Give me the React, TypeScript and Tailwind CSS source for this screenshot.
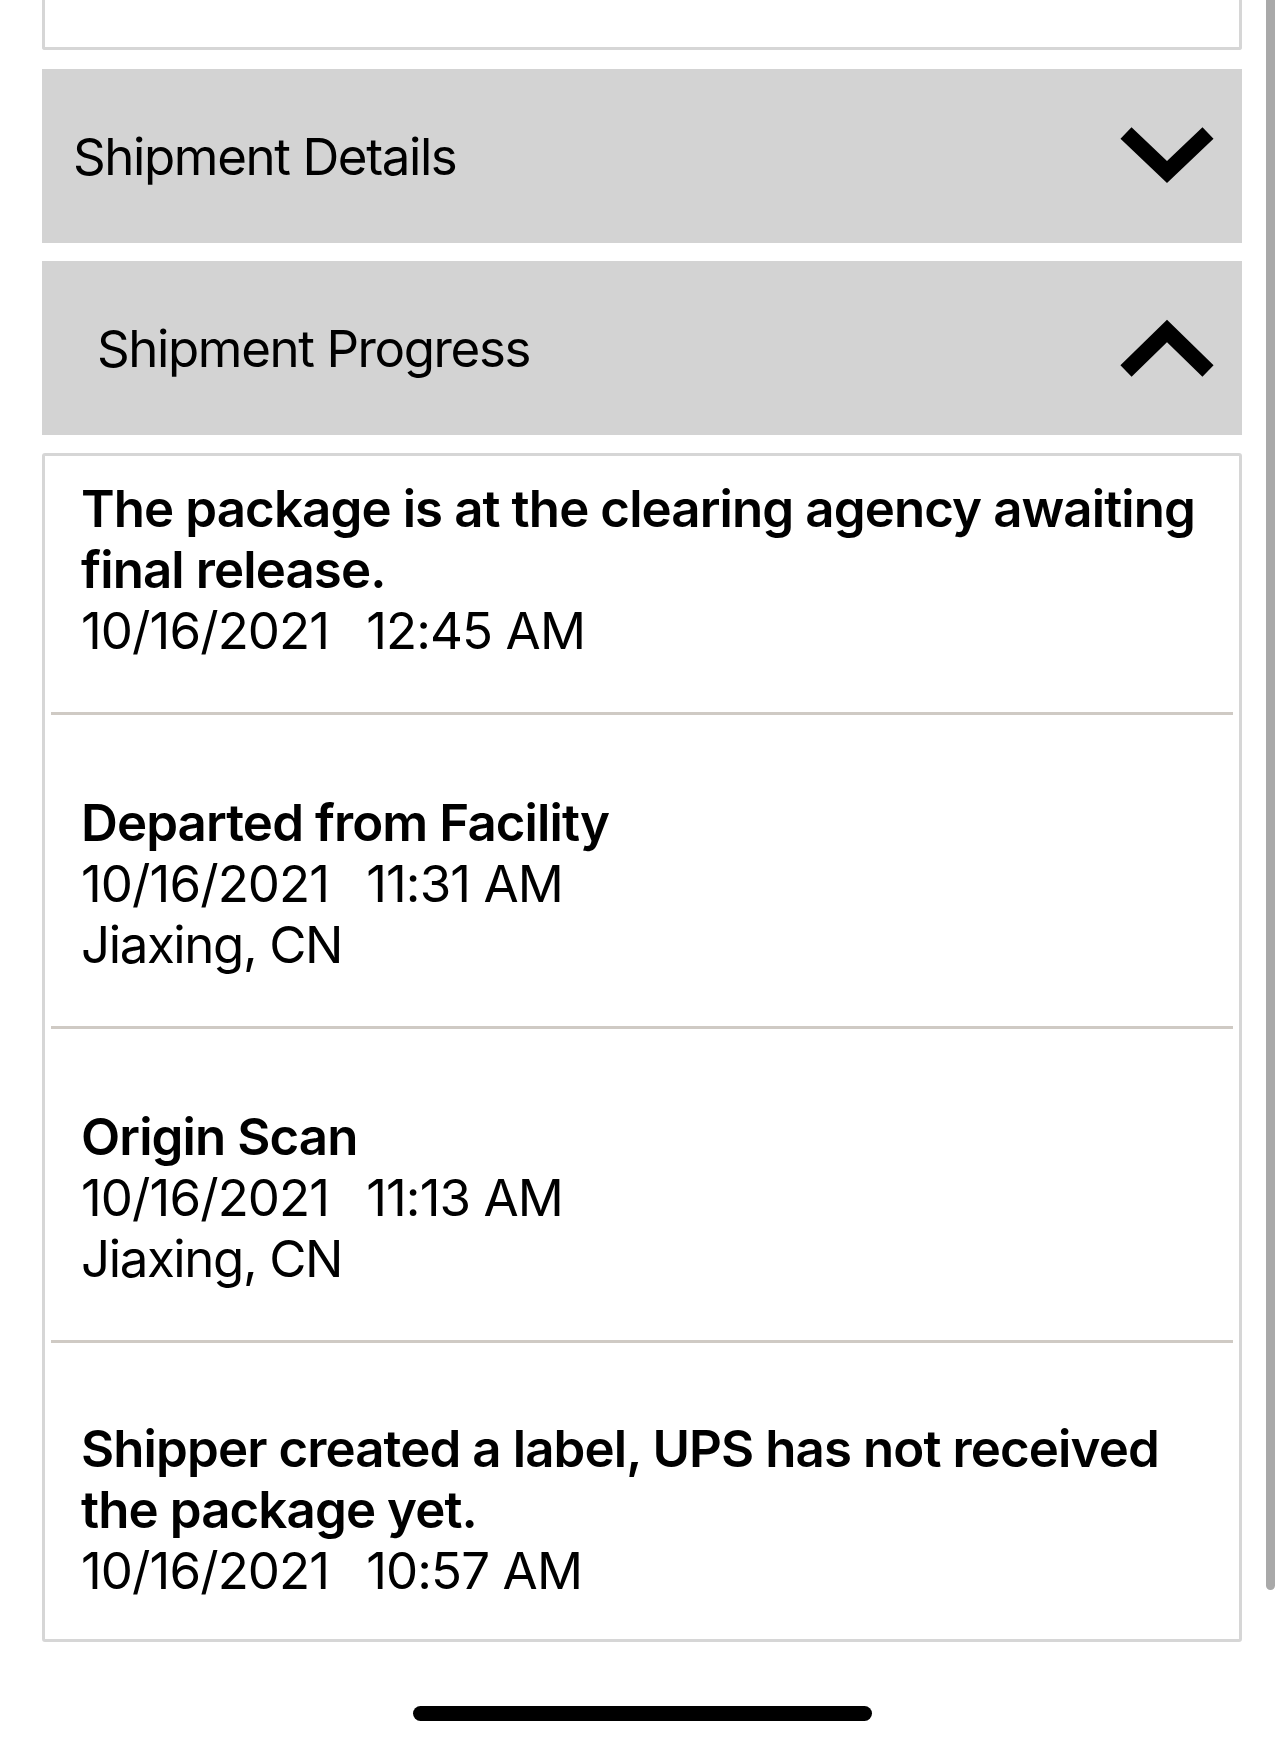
import type { ReactNode } from "react";

type TrackingEvent = {
  id: string;
  title: string;
  date: string;
  time: string;
  location?: string;
};

const events: TrackingEvent[] = [
  {
    id: "clearance",
    title: "The package is at the clearing agency awaiting final release.",
    date: "10/16/2021",
    time: "12:45 AM",
  },
  {
    id: "departed",
    title: "Departed from Facility",
    date: "10/16/2021",
    time: "11:31 AM",
    location: "Jiaxing, CN",
  },
  {
    id: "origin",
    title: "Origin Scan",
    date: "10/16/2021",
    time: "11:13 AM",
    location: "Jiaxing, CN",
  },
  {
    id: "label",
    title: "Shipper created a label, UPS has not received the package yet.",
    date: "10/16/2021",
    time: "10:57 AM",
  },
];

function Chevron({ up }: { up?: boolean }) {
  return (
    <svg width="90" height="58" viewBox="0 0 90 58" fill="none" className="shrink-0 overflow-visible">
      <polyline
        points={up ? "4,52 45,12 86,52" : "4,6 45,45 86,6"}
        stroke="#000"
        strokeWidth="16"
        strokeLinejoin="miter"
        strokeLinecap="butt"
      />
    </svg>
  );
}

function SectionHeader({ children, up, indent }: { children: ReactNode; up?: boolean; indent: string }) {
  return (
    <div className={`flex h-[174px] items-center justify-between bg-[#d3d3d3] pr-[30px] ${indent}`}>
      <span className="text-[51px] leading-[61px] tracking-[-1.4px] text-black">{children}</span>
      <Chevron up={up} />
    </div>
  );
}

export default function App() {
  return (
    <div
      className="relative min-h-[1745px] overflow-hidden bg-white px-[42px] pb-[24px]"
      style={{ fontFamily: "Inter, 'Noto Sans', sans-serif" }}
    >
      {/* scroll indicator */}
      <div className="absolute right-[9px] top-0 h-[1590px] w-[9px] rounded-b-full bg-[#a9a9a9]" />

      <div className="h-[50px] rounded-b-[3px] border-x-[3px] border-b-[3px] border-[#d6d6d6] bg-white" />

      <div className="mt-[19px] flex flex-col gap-[18px]">
        <SectionHeader indent="pl-[31px]">Shipment Details</SectionHeader>
        <SectionHeader indent="pl-[55px]" up>
          Shipment Progress
        </SectionHeader>

        <div className="rounded-[3px] border-[3px] border-[#d6d6d6] bg-white">
          {events.map((ev, i) => {
            const first = i === 0;
            const last = i === events.length - 1;
            return (
              <div key={ev.id}>
                <div
                  className={`pl-[36px] pr-[20px] text-[51px] leading-[61px] tracking-[-1.4px] text-black ${
                    first ? "pt-[22px]" : last ? "pt-[75px]" : "pt-[77px]"
                  } ${last ? "pb-[38px]" : "pb-[51px]"}`}
                >
                  <p className="font-semibold tracking-[-0.9px]">{ev.title}</p>
                  <p className="tracking-[-0.9px]">
                    <span>{ev.date}</span>
                    <span className="ml-[37px]">{ev.time}</span>
                  </p>
                  {ev.location && <p>{ev.location}</p>}
                </div>
                {!last && <div className="mx-[6px] h-[3px] bg-[#cfcac4]" />}
              </div>
            );
          })}
        </div>
      </div>

      <div className="mx-auto mt-[64px] h-[15px] w-[459px] rounded-full bg-black" />
    </div>
  );
}
